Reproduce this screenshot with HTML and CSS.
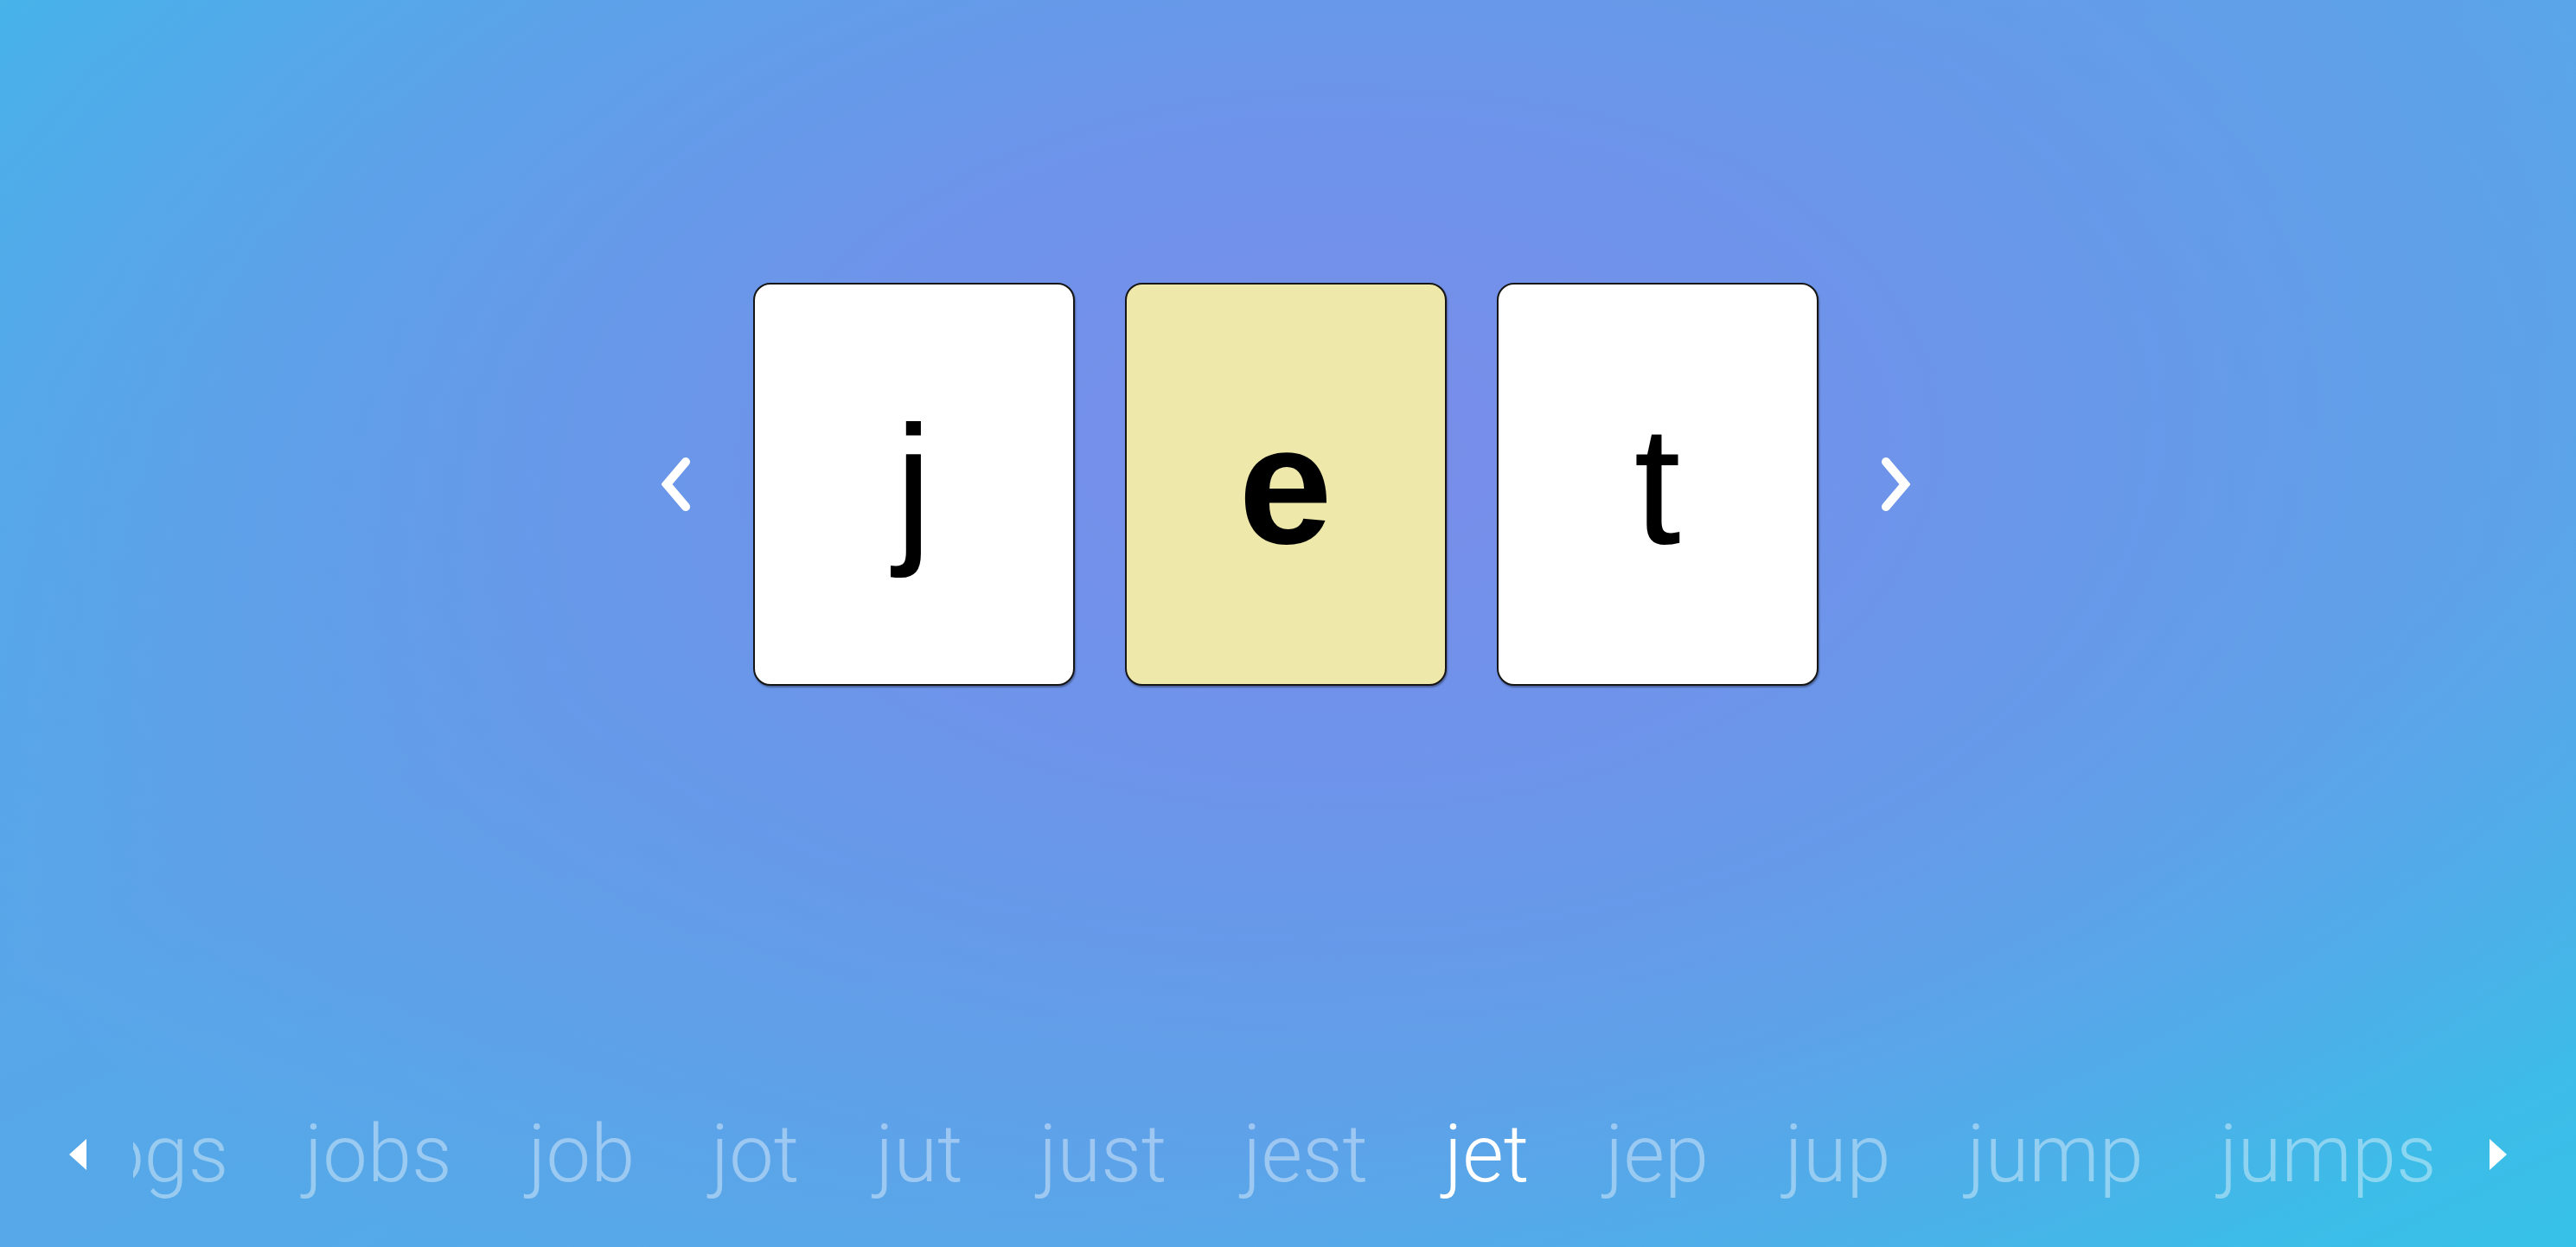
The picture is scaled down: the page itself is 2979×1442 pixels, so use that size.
FILE: index.html
```html
<!DOCTYPE html>
<html lang="en">
<head>
  <meta charset="UTF-8" />
  <meta name="viewport" content="width=device-width, initial-scale=1.0"/>
  <title>Word Ladder</title>
  <link rel="stylesheet" href="styles.css">
</head>
<body>
  <main class="game">
    <section class="stage">
      <button class="nav-arrow" aria-label="Previous letter">
        <svg width="36" height="64" viewBox="0 0 36 64">
          <polyline points="28,6 6,32 28,58" />
        </svg>
      </button>

      <div class="tiles">
        <div class="tile">j</div>
        <div class="tile current">e</div>
        <div class="tile">t</div>
      </div>

      <button class="nav-arrow" aria-label="Next letter">
        <svg width="36" height="64" viewBox="0 0 36 64">
          <polyline points="8,6 30,32 8,58" />
        </svg>
      </button>
    </section>

    <footer class="word-bar">
      <span class="bar-arrow">
        <svg width="20" height="36" viewBox="0 0 20 36"><polygon points="20,0 0,18 20,36" /></svg>
      </span>
      <div class="word-window">
        <ul class="word-track">
          <li>jogs</li>
          <li>jobs</li>
          <li>job</li>
          <li>jot</li>
          <li>jut</li>
          <li>just</li>
          <li>jest</li>
          <li class="active">jet</li>
          <li>jep</li>
          <li>jup</li>
          <li>jump</li>
          <li>jumps</li>
        </ul>
      </div>
      <span class="bar-arrow">
        <svg width="20" height="36" viewBox="0 0 20 36"><polygon points="0,0 20,18 0,36" /></svg>
      </span>
    </footer>
  </main>
</body>
</html>
```

FILE: styles.css
```css
* {
  box-sizing: border-box;
  margin: 0;
  padding: 0;
}

html, body {
  height: 100%;
}

body {
  overflow: hidden;
  font-family: 'Roboto', 'Noto Sans', sans-serif;
  background:
    radial-gradient(ellipse 62% 78% at 52% 36%, #7a8de9 0%, #6f93ea 30%, rgba(96, 160, 232, 0) 100%),
    linear-gradient(155deg, #44b5e9 0%, #58a6e8 40%, #52ace8 70%, #36c1e8 100%);
}

.game {
  display: flex;
  flex-direction: column;
  height: 100vh;
}

/* letter tiles */
.stage {
  display: flex;
  justify-content: center;
  align-items: center;
  gap: 70px;
  padding-top: 327px;
  padding-right: 6px;
}

.nav-arrow {
  display: flex;
  background: none;
  border: none;
  cursor: pointer;
}

.nav-arrow polyline {
  fill: none;
  stroke: #fff;
  stroke-width: 10;
  stroke-linecap: round;
  stroke-linejoin: miter;
}

.tiles {
  display: flex;
  gap: 58px;
}

.tile {
  display: flex;
  justify-content: center;
  align-items: center;
  width: 372px;
  height: 466px;
  background: #fff;
  border: 2px solid #161616;
  border-radius: 20px;
  box-shadow: 1px 2px 2px rgba(0, 0, 0, 0.35);
  font-family: 'Liberation Sans', Arial, sans-serif;
  font-size: 195px;
  color: #000;
}

.tile.current {
  background: #eee8aa;
  font-weight: bold;
}

/* word history */
.word-bar {
  display: flex;
  align-items: center;
  gap: 54px;
  margin-top: auto;
  padding: 0 80px 52px 80px;
}

.bar-arrow {
  display: flex;
}

.bar-arrow polygon {
  fill: #fff;
}

.word-window {
  flex: 1;
  overflow: hidden;
}

.word-track {
  display: flex;
  gap: 88px;
  margin-left: -60px;
  list-style: none;
}

.word-track li {
  font-size: 92px;
  font-weight: 300;
  line-height: 111px;
  white-space: nowrap;
  color: rgba(255, 255, 255, 0.4);
}

.word-track li.active {
  color: #fff;
}
```
